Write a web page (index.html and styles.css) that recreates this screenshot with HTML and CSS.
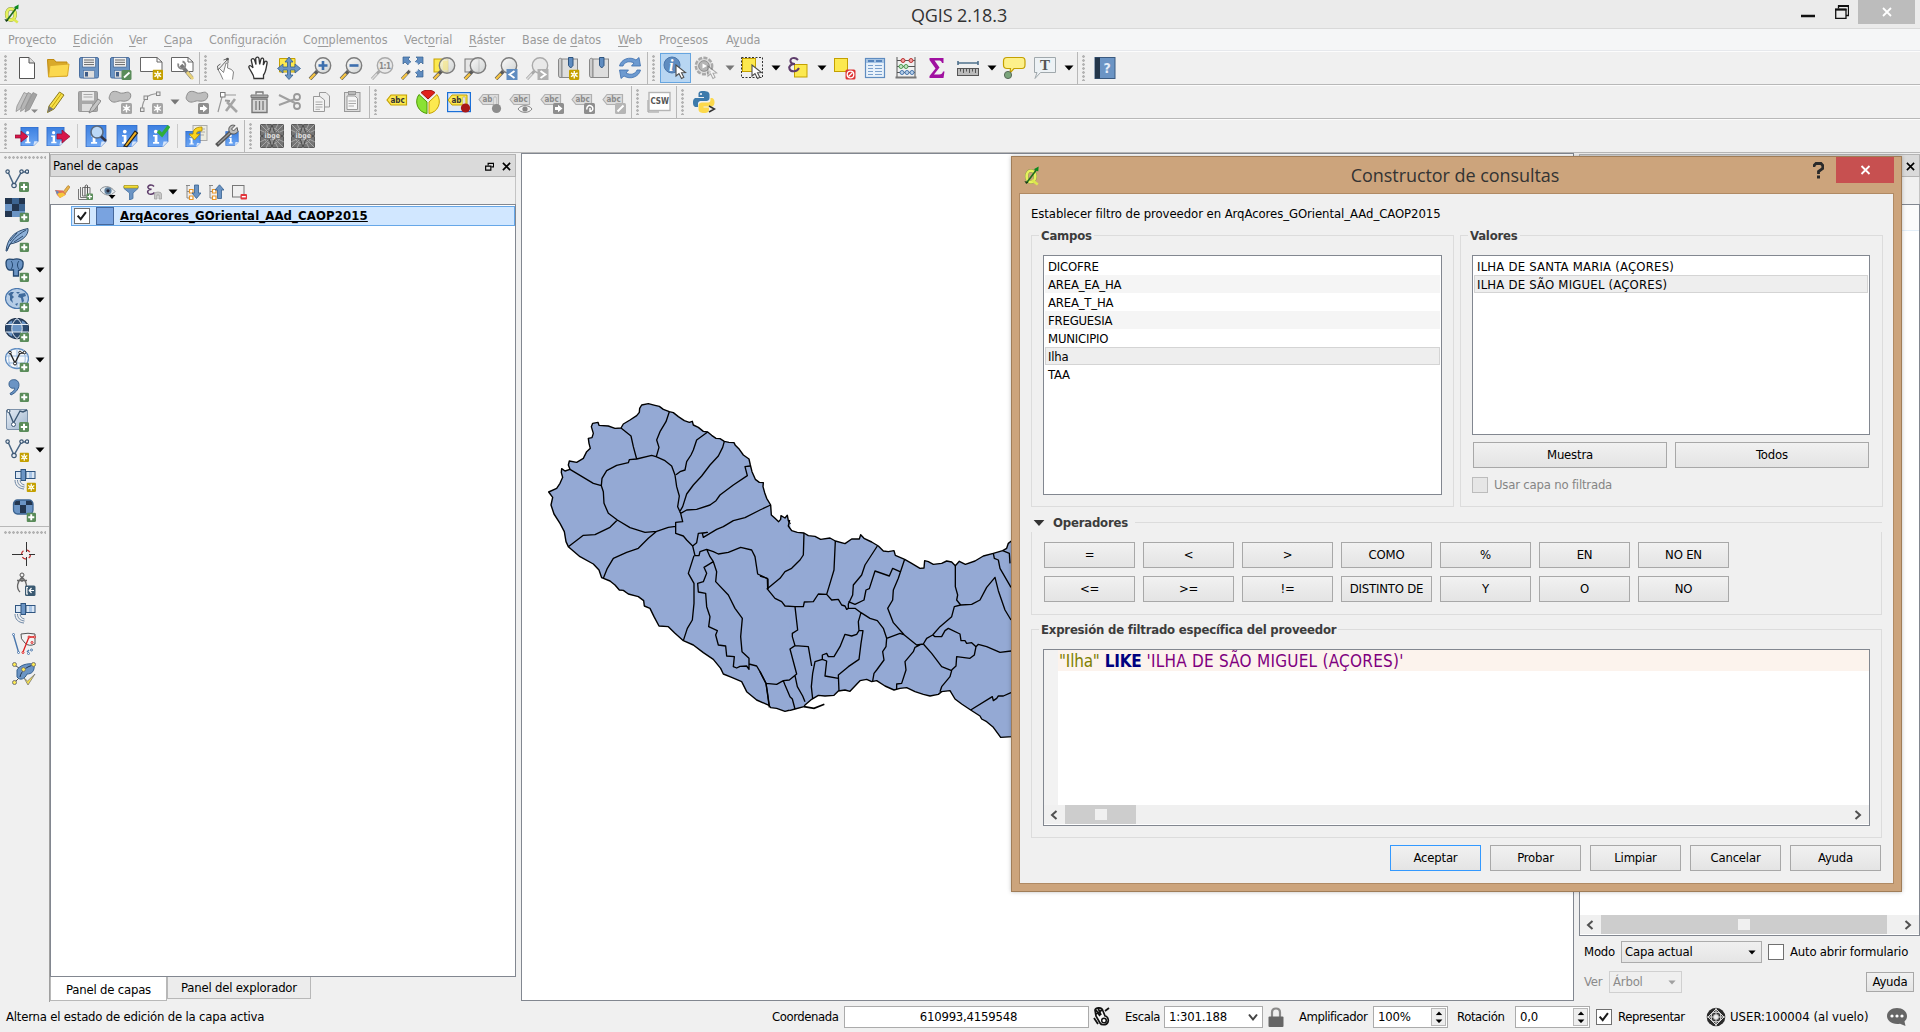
FILE: index.html
```html
<!DOCTYPE html>
<html lang="es">
<head>
<meta charset="utf-8">
<title>QGIS 2.18.3</title>
<link rel="stylesheet" href="styles.css">
</head>
<body>
<svg class="sprite" aria-hidden="true">
  <defs>
    <linearGradient id="g-blue" x1="0" y1="0" x2="0" y2="1"><stop offset="0" stop-color="#3b7fe0"/><stop offset="1" stop-color="#6fa8f5"/></linearGradient>
    <linearGradient id="g-glass" x1="0" y1="0" x2="1" y2="1"><stop offset="0" stop-color="#ffffff"/><stop offset="1" stop-color="#c4c8c8"/></linearGradient>
    <linearGradient id="g-box" x1="0" y1="0" x2="1" y2="1"><stop offset="0" stop-color="#e8eef5"/><stop offset="1" stop-color="#9db4ce"/></linearGradient>
  </defs>
  <!-- shared parts -->
  <symbol id="plus" viewBox="0 0 10 10"><rect width="10" height="10" rx="1.6" fill="#5a8c5a"/><path d="M5 1.8V8.2M1.8 5H8.2" stroke="#fff" stroke-width="2"/></symbol>
  <symbol id="star" viewBox="0 0 11 11"><rect width="11" height="11" rx="1.5" fill="#c4a000"/><path d="M5.5 1.5V9.5M2 3.5L9 7.5M9 3.5L2 7.5" stroke="#fff" stroke-width="1.4"/><circle cx="5.500" cy="5.500" r="1.900" fill="#fff"/><circle cx="5.500" cy="5.500" r="1" fill="#fce94f"/></symbol>
  <symbol id="star-g" viewBox="0 0 11 11"><rect width="11" height="11" rx="1.5" fill="#a5a5a5"/><path d="M5.500 1.500V9.500M2 3.500L9 7.500M9 3.500L2 7.500" stroke="#fff" stroke-width="1.400"/><circle cx="5.500" cy="5.500" r="1.900" fill="#fff"/></symbol>
  <symbol id="cursor" viewBox="0 0 12 16"><path d="M1 1L1 12L4 9.500L6.500 14.500L8.800 13.300L6.500 8.800L10.500 8.500Z" fill="#fff" stroke="#4d4d4d" stroke-width="1.100"/></symbol>
  <symbol id="lens" viewBox="0 0 24 24"><path d="M2 23L9.500 15" stroke="#5a5a5a" stroke-width="3.600"/><path d="M2 23L7 17.700" stroke="#f6c544" stroke-width="2.400"/><circle cx="15" cy="9.500" r="7.700" fill="url(#g-glass)" fill-opacity=".75" stroke="#7d7d7d" stroke-width="1.400"/></symbol>
  <symbol id="lens-g" viewBox="0 0 24 24"><path d="M2 23L9.500 15" stroke="#a8a8a8" stroke-width="3"/><path d="M2 23L7 17.700" stroke="#ddd" stroke-width="1.600"/><circle cx="15" cy="9.500" r="7.700" fill="#e9e9e9" stroke="#aaa" stroke-width="1.400"/></symbol>
  <symbol id="tag" viewBox="0 0 24 24"><path d="M2 10L6 5H21.500V15H6Z" fill="#fce94f" stroke="#c4a000" stroke-width="1.200"/></symbol>
  <symbol id="tag-g" viewBox="0 0 24 24"><path d="M1 9.500L5 4.500H20.500V14.500H5Z" fill="#dcdcdc" stroke="#b0b0b0" stroke-width="1.200"/></symbol>
  <symbol id="vee" viewBox="0 0 24 24"><path d="M3 4L9 17L16.500 4H22" fill="none" stroke="#4a6785" stroke-width="1.500"/><g fill="#e8eef5" stroke="#3b5672" stroke-width="1.200"><circle cx="2.600" cy="3.600" r="1.700"/><circle cx="16.500" cy="3.600" r="1.700"/><circle cx="22" cy="3.600" r="1.700"/><circle cx="9" cy="17.500" r="2.200"/></g></symbol>
  <symbol id="info" viewBox="0 0 20 20"><path d="M1 0H19V15L14 20H1Z" fill="url(#g-blue)" stroke="#2c66c4" stroke-width=".8"/><path d="M19 15L14 20L15 15Z" fill="#d8e6fa"/><circle cx="8" cy="6" r="1.700" fill="#fff"/><path d="M5.500 9H9.500V15.500H11V17H5.500V15.500H7V10.500H5.500Z" fill="#fff"/></symbol>
  <symbol id="floppy" viewBox="0 0 24 24"><rect x="2.500" y="1.500" width="19" height="20.500" rx="1.500" fill="#6b94c4" stroke="#4a6fa0"/><rect x="5.500" y="1.500" width="13" height="9.500" fill="#f2f2f2" stroke="#3d5c88" stroke-width=".6"/><path d="M7 4H17M7 6.300H17M7 8.600H17" stroke="#666"/><rect x="6.500" y="14.500" width="11" height="7.500" fill="#ddd" stroke="#4a6fa0" stroke-width=".6"/><rect x="8" y="16" width="3" height="4.500" fill="#3d5c88"/></symbol>
  <symbol id="sat" viewBox="0 0 24 24"><g stroke="#2f5580" stroke-width="1"><rect x="3.500" y="3.500" width="6" height="7" fill="#dbe7f4"/><rect x="14" y="3.500" width="9" height="7" fill="#dbe7f4"/><rect x="9" y="1.500" width="4.500" height="11" fill="#6b94c4"/></g><path d="M17 4H20V10H17Z" fill="#a9c5e6"/><path d="M3 12C3 17 6 20.500 12 21M5.500 12C5.500 16 8 18.500 12.500 19M8 12.500C8.500 15 10 16.500 12.500 17" fill="none" stroke="#6d87a5" stroke-width="1"/></symbol>
  <symbol id="down" viewBox="0 0 10 6"><path d="M.5.500H9.500L5 5.500Z"/></symbol>
  <symbol id="qlogo" viewBox="0 0 18 22"><ellipse cx="7.800" cy="11.500" rx="4.800" ry="6.400" fill="none" stroke="#8b9a4a" stroke-width="4"/><ellipse cx="7.800" cy="11.500" rx="4.800" ry="6.400" fill="none" stroke="#e6f25c" stroke-width="3"/><path d="M9 15.500L15.500 20.500" stroke="#dce84e" stroke-width="3"/><path d="M3 18.500L14 4" stroke="#1d6b1d" stroke-width="1.800"/><path d="M16.500 .3L16 6L11 3.500Z" fill="#0b8a1e"/><path d="M.5 16.500L5 18L2.500 20Z" fill="#143f14"/></symbol>

  <!-- file -->
  <symbol id="i-new" viewBox="0 0 24 24"><path d="M4.500 1.500H14L19.500 7V22.500H4.500Z" fill="#fff" stroke="#555"/><path d="M14 1.500V7H19.500" fill="#ddd" stroke="#555"/></symbol>
  <symbol id="i-open" viewBox="0 0 24 24"><path d="M1.500 3.500H8L10 6H21V20H2.500Z" fill="#d9a92a" stroke="#c08a10"/><path d="M4 9.500L23 8L21.500 20L2.500 21Z" fill="#fbd84f" stroke="#d9a92a"/></symbol>
  <symbol id="i-saveas" viewBox="0 0 24 24"><use href="#floppy"/><rect x="13.500" y="14" width="10" height="10" rx="1.500" fill="#5a8c5a"/><path d="M16 21.500L21.500 16.500" stroke="#fff" stroke-width="1.800"/></symbol>
  <symbol id="i-layout" viewBox="0 0 24 24"><path d="M1.500 1.500H18L23 6V15.500H1.500Z" fill="#fff" stroke="#666"/><path d="M18 1.500V6H23" fill="none" stroke="#666"/><use href="#star" x="13.500" y="13.500" width="10.500" height="10.500"/></symbol>
  <symbol id="i-layouts" viewBox="0 0 24 24"><path d="M1.500 1.500H18L23 6V15.500H1.500Z" fill="#fff" stroke="#666"/><path d="M18 1.500V6H23" fill="none" stroke="#666"/><path d="M11 9L22 22" stroke="#777" stroke-width="3.600"/><path d="M17 16L23 23" stroke="#e8d27a" stroke-width="2.800"/><path d="M8.500 7.500a3.600 3.600 0 1 0 4-2" fill="none" stroke="#888" stroke-width="1.800"/></symbol>
  <!-- navigation -->
  <symbol id="i-touch" viewBox="0 0 24 24"><path d="M8 23.500L5.500 18L3 13.500L4.500 12.500L8.500 16.500L11 7L12.800 7.500L12.500 12L16.500 13.500L18.500 16L17.500 23.500" fill="#fff" stroke="#777" stroke-width=".9"/><path d="M3 14L12 4M8.500 4L13 2.500L13 7M5.500 8L2.500 10L3 14" fill="none" stroke="#666" stroke-width="1"/><circle cx="12.500" cy="3" r="1.300" fill="#555"/></symbol>
  <symbol id="i-hand" viewBox="0 0 24 24"><path d="M8 22.500C8 18 4 15 2.800 11C3.300 8.500 5.500 9.800 7 12L5.200 4C6 1.800 8 2.300 8.600 4L10 8.500L9.700 2.500C10.500.5 12.600 1 13 2.700L13.700 8.300L15 3C16 1.300 17.700 2.200 17.700 4L17.300 9L19 5.500C20.300 4.500 21.500 5.800 21 7.500C20 12 20 16 17.500 19V22.500Z" fill="#fff" stroke="#333" stroke-width="1.300"/></symbol>
  <symbol id="i-pansel" viewBox="0 0 24 24"><path d="M2.500 2.500H18V16H2.500Z" fill="#fce94f" stroke="#c4a000"/><path d="M12 1L16 6H13.500V11H18V8L23.500 12.500L18 17V14H13.500V19H16L12 23.500L8 19H10.500V14H6V17L.5 12.500L6 8V11H10.500V6H8Z" fill="#6b94c4" stroke="#35608f" stroke-width=".8"/></symbol>
  <symbol id="i-zin" viewBox="0 0 24 24"><use href="#lens"/><path d="M15 5V14M10.500 9.500H19.500" stroke="#3c6fae" stroke-width="2.600"/></symbol>
  <symbol id="i-zout" viewBox="0 0 24 24"><use href="#lens"/><path d="M10.500 9.500H19.500" stroke="#3c6fae" stroke-width="2.600"/></symbol>
  <symbol id="i-zfull" viewBox="0 0 24 24"><g fill="#5f8cc0" stroke="#35608f" stroke-width=".7"><path d="M2 1H9L7 3L10 6L7 9L4 6L2 8Z"/><path d="M22 1H15L17 3L14 6L17 9L20 6L22 8Z"/><path d="M22 21H15L17 19L14 16L17 13L20 16L22 14Z"/></g><path d="M1 23L9.500 14" stroke="#5a5a5a" stroke-width="3"/><path d="M1 23L6 17.700" stroke="#f6c544" stroke-width="2.200"/><circle cx="12.500" cy="11" r="5.500" fill="#f5f5f5" fill-opacity=".9"/></symbol>
  <symbol id="i-zsel" viewBox="0 0 24 24"><rect x="2" y="3" width="14" height="13" fill="#fce94f" stroke="#c4a000"/><use href="#lens"/><path d="M11 5H16V14H11Z" fill="#f5e68a" opacity=".6"/></symbol>
  <symbol id="i-zlay" viewBox="0 0 24 24"><rect x="2" y="3" width="14" height="13" fill="#e6e6e6" stroke="#777"/><use href="#lens"/></symbol>
  <symbol id="i-zlast" viewBox="0 0 24 24"><use href="#lens"/><rect x="12.500" y="13" width="11" height="11" fill="#5f8cc0"/><path d="M20.500 15L15.500 18.500L20.500 22" fill="none" stroke="#fff" stroke-width="1.900"/></symbol>
  <symbol id="i-znext" viewBox="0 0 24 24"><use href="#lens-g"/><rect x="12.500" y="13" width="11" height="11" fill="#b0b0b0"/><path d="M15.500 15L20.500 18.500L15.500 22" fill="none" stroke="#fff" stroke-width="1.900"/></symbol>
  <symbol id="i-bm" viewBox="0 0 24 24"><path d="M2.500 4C2.500 2 6 1.500 6 4V21.500H4Q2.500 21.500 2.500 19Z" fill="#ccc" stroke="#888"/><rect x="6" y="3" width="15.500" height="18.500" fill="#dedede" stroke="#888"/><path d="M12.500 1.500H17V9.500L14.700 12L12.500 9.500Z" fill="#5f8cc0" stroke="#2f5580"/></symbol>
  <symbol id="i-bmnew" viewBox="0 0 24 24"><use href="#i-bm"/><use href="#star" x="13" y="13.500" width="10.500" height="10.500"/></symbol>
  <symbol id="i-refresh" viewBox="0 0 24 24"><path d="M1.500 10C3 3 12 0 18 4L21 1.500L22.500 10H13.500L16 7C11 4.500 6.500 6 5 10Z" fill="#6d9ad0" stroke="#3c6fae" stroke-width=".8"/><path d="M22.500 14C21 21 12 24 6 20L3 22.500L1.500 14H10.500L8 17C13 19.500 17.500 18 19 14Z" fill="#6d9ad0" stroke="#3c6fae" stroke-width=".8"/></symbol>
  <!-- attributes -->
  <symbol id="i-ball" viewBox="0 0 24 24"><circle cx="9" cy="9" r="8" fill="#5f8cc0" stroke="#4a77ad"/></symbol>
  <symbol id="i-gear" viewBox="0 0 24 24"><circle cx="10" cy="10" r="8.200" fill="#ddd" stroke="#a8a8a8" stroke-width="2.400" stroke-dasharray="4 1.400"/><circle cx="10" cy="10" r="5.300" fill="#b5b5b5" stroke="#8e8e8e"/><path d="M8.500 7.500L13 10L8.500 12.500Z" fill="#fff"/><g opacity=".45"><use href="#cursor" x="13" y="9" width="11" height="15"/></g></symbol>
  <symbol id="i-select" viewBox="0 0 24 24"><rect x="1.500" y="1.500" width="21" height="20" fill="none" stroke="#333" stroke-dasharray="2 1.500"/><rect x="2.500" y="2.500" width="13" height="13" fill="#fce94f" stroke="#c4a000"/><use href="#cursor" x="11" y="8" width="12" height="16"/></symbol>
  <symbol id="i-exprsel" viewBox="0 0 24 24"><rect x="8.500" y="8.500" width="12.500" height="12.500" fill="#fce94f" stroke="#c4a000"/><path d="M12 4C9 .5 3.500 2 4.500 5.500C5 8 8 8 9 8C5 8 2.500 10 3.500 13C5 16.500 11 16 13 12" fill="none" stroke="#5e3d6b" stroke-width="2"/></symbol>
  <symbol id="i-desel" viewBox="0 0 24 24"><rect x="2.500" y="2.500" width="13" height="13" fill="#fce94f" stroke="#c4a000"/><rect x="13.500" y="13.500" width="10" height="10" rx="1.500" fill="#d33" /><circle cx="18.500" cy="18.500" r="3.300" fill="none" stroke="#fff" stroke-width="1.300"/><path d="M16.500 20.500L20.500 16.500" stroke="#fff" stroke-width="1.200"/></symbol>
  <symbol id="i-table" viewBox="0 0 24 24"><rect x="2.500" y="2.500" width="19" height="19" fill="#e8f1fa" stroke="#5f8cc0" stroke-width="1.200"/><rect x="3" y="3" width="18" height="4" fill="#a6c4e4"/><path d="M5 5H11M13 5H19" stroke="#3c6fae" stroke-width="1.500"/><path d="M5 9.500H10M12 9.500H19M5 12.500H10M12 12.500H19M5 15.500H10M12 15.500H19M5 18.500H10M12 18.500H19" stroke="#7aa0cc" stroke-width="1.200"/></symbol>
  <symbol id="i-abacus" viewBox="0 0 24 24"><path d="M3 1V22M21 1V22M3 4.500H21M3 10.500H21M3 16.500H21" stroke="#555" fill="none"/><path d="M1.500 21.500H22.500" stroke="#777" stroke-width="2"/><g stroke="#b33" fill="#f3a0a0"><circle cx="9" cy="4.500" r="2"/><circle cx="17" cy="4.500" r="2"/></g><g stroke="#4e9a4e" fill="#c4e4c4"><circle cx="7" cy="10.500" r="2"/><circle cx="12" cy="10.500" r="2"/></g><g stroke="#4a77ad" fill="#b5cfea"><circle cx="8" cy="16.500" r="2"/><circle cx="13" cy="16.500" r="2"/><circle cx="18" cy="16.500" r="2"/></g></symbol>
  <symbol id="i-sum" viewBox="0 0 24 24"><path d="M4.500 2H18.500V7H17C16.500 5 15.500 4.500 13 4.500H9.500L14.500 11.500L9 18.500H14C16.500 18.500 17.500 17.500 18 15.500H19.500L18.500 22H4.500V20L10.500 12.500L4.500 4Z" fill="#a010a0"/></symbol>
  <symbol id="i-measure" viewBox="0 0 24 24"><path d="M2 7H22M2 5V9M22 5V9" stroke="#4f718c" stroke-width="1.600"/><rect x="1.500" y="12.500" width="21" height="7" fill="#bbb" stroke="#555"/><path d="M4.500 12.500V15.500M7.500 12.500V17M10.500 12.500V15.500M13.500 12.500V17M16.500 12.500V15.500M19.500 12.500V17" stroke="#555"/></symbol>
  <symbol id="i-tip" viewBox="0 0 24 24"><path d="M5 1.500H20Q23 1.500 23 5V9Q23 12.500 20 12.500H12L8 17L8.500 12.500H5Q1.500 12.500 1.500 9V5Q1.500 1.500 5 1.500Z" fill="#fdf08a" stroke="#c4a000" stroke-width="1.200"/><circle cx="6" cy="19" r="3.600" fill="#7ba57b" stroke="#5a6b5a"/></symbol>
  <symbol id="i-text" viewBox="0 0 24 24"><path d="M1.500 1.500H22.500V16.500H7.500L2 22.500L4 16.500H1.500Z" fill="#edf2f5" stroke="#a0a8ac"/></symbol>
  <symbol id="i-book" viewBox="0 0 24 24"><rect x="2" y="1.500" width="20" height="21" fill="#6b94c4" stroke="#3a5a80"/><rect x="2" y="1.500" width="5" height="21" fill="#23364a"/></symbol>
  <!-- digitizing -->
  <symbol id="i-edits" viewBox="0 0 24 24"><g stroke="#8a8a8a" stroke-width=".7"><path d="M1 21.500L2 16L9 2.500L12.500 4L5 19Z" fill="#c4c4c4"/><path d="M5.500 21.500L6.500 16L13 2.500L16.500 4L9.500 19Z" fill="#b5b5b5"/><path d="M10 22L11 16.500L18 2.500L22 4.500L14.500 19.500Z" fill="#a3a3a3"/></g><path d="M16 19.500H23L19.500 23Z" fill="#888"/></symbol>
  <symbol id="i-pencil" viewBox="0 0 24 24"><path d="M1.500 22.500L3 16L13.500 2L18 5L8 19Z" fill="#f7e04b" stroke="#8a7a1e"/><path d="M1.500 22.500L3 16L7.500 19Z" fill="#777"/><path d="M5.500 17.500L15.500 3.500" stroke="#c9a800"/></symbol>
  <symbol id="i-savee" viewBox="0 0 24 24"><rect x="1.500" y="1.500" width="19" height="20" rx="1" fill="#a8a8a8" stroke="#999"/><rect x="5" y="2" width="12" height="8.500" fill="#ececec"/><path d="M6.500 4.500H15.500M6.500 7H15.500" stroke="#aaa"/><rect x="5" y="14" width="10" height="7" fill="#ddd"/><path d="M12 23L14 18L21 9L24 11L17 20.500Z" fill="#c4c4c4" stroke="#888"/></symbol>
  <symbol id="i-poly" viewBox="0 0 24 24"><path d="M2 5C3 0 9 1 12 3C17 4 20 0 22.500 4C24 9 19 12 14 11C10 10 7 14 3 11C.5 9 1 7 2 5Z" fill="#bdbdbd" stroke="#8c8c8c"/><use href="#star-g" x="13" y="13" width="11" height="11"/></symbol>
  <symbol id="i-curve" viewBox="0 0 24 24"><path d="M3 19C4 9 8 4 19 3.500" fill="none" stroke="#999" stroke-width="1.200"/><g fill="#e8e8e8" stroke="#888"><rect x="1.500" y="18" width="3.500" height="3.500"/><rect x="5" y="6" width="3.500" height="3.500"/><rect x="17.500" y="2" width="3.500" height="3.500"/></g><use href="#star-g" x="13" y="13" width="11" height="11"/></symbol>
  <symbol id="i-move" viewBox="0 0 24 24"><path d="M2 5C3 0 9 1 12 3C17 4 20 0 22.500 4C24 9 19 12 14 11C10 10 7 14 3 11C.5 9 1 7 2 5Z" fill="#bdbdbd" stroke="#8c8c8c"/><rect x="13" y="13" width="11" height="11" rx="1.500" fill="#8e8e8e"/><path d="M15 17H18V14.800L22.500 18.500L18 22.200V20H15Z" fill="#fff"/></symbol>
  <symbol id="i-node" viewBox="0 0 24 24"><path d="M2 22L6.500 5H20" fill="none" stroke="#999" stroke-width="1.200"/><rect x="4.500" y="2.500" width="4.500" height="4.500" fill="#fff" stroke="#777"/><path d="M10 21L19 9M11 12L21 22" stroke="#a5a5a5" stroke-width="2.600"/><path d="M9 10.500L14 11" stroke="#999" stroke-width="2"/></symbol>
  <symbol id="i-trash" viewBox="0 0 24 24"><path d="M5 9H20V22.500H5Z" fill="#d5d5d5" stroke="#777" stroke-width="1.400"/><path d="M4 5H21V7.500H4Z" fill="#aaa" stroke="#777"/><path d="M9 4.500V2H16V4.500M9 11V20M12.500 11V20M16 11V20" fill="none" stroke="#777" stroke-width="1.300"/></symbol>
  <symbol id="i-cut" viewBox="0 0 24 24"><path d="M1 5L17 13M1 15L17 9" stroke="#a0a0a0" stroke-width="2"/><circle cx="19" cy="7" r="3" fill="none" stroke="#999" stroke-width="1.800"/><circle cx="19" cy="16" r="3" fill="none" stroke="#999" stroke-width="1.800"/></symbol>
  <symbol id="i-copy" viewBox="0 0 24 24"><path d="M10.500 2.500H17L20.500 6V17H10.500Z" fill="#eee" stroke="#999"/><path d="M4.500 6.500H11L15.500 10V21.500H4.500Z" fill="#f3f3f3" stroke="#999"/><path d="M6.500 12H13.500M6.500 14.500H13.500M6.500 17H13.500M6.500 19.300H11" stroke="#aaa"/></symbol>
  <symbol id="i-paste" viewBox="0 0 24 24"><rect x="4.500" y="2.500" width="15.500" height="19" fill="#ddd" stroke="#999"/><path d="M7 6H15L17.500 8.500V19.500H7Z" fill="#f6f6f6" stroke="#999"/><path d="M8.500 11H16M8.500 13.500H16M8.500 16H14" stroke="#aaa"/><rect x="8.500" y="1.500" width="7" height="3" fill="#bbb" stroke="#999"/></symbol>
  <!-- labels -->
  <symbol id="i-pie" viewBox="0 0 24 24"><path d="M12 9L5 2.500A11 11 0 0 1 19 2.500Z" fill="#e0201c" stroke="#a01010"/><path d="M11 12V23.500A12 12 0 0 1 3 4.500Z" fill="#8ae234" stroke="#4e9a06"/><path d="M13 12V23.500A12 12 0 0 0 21 4.500Z" fill="#fce94f" stroke="#c4a000"/></symbol>
  <symbol id="i-pinbg" viewBox="0 0 24 24"><rect x=".6" y="2.600" width="22.800" height="19" fill="#dfe9f5" stroke="#1a6fd8" stroke-width="1.200"/><path d="M1 10L5 5H20V15H5Z" fill="#fce94f" stroke="#c4a000"/></symbol>
  <symbol id="i-pin" viewBox="0 0 24 24"><path d="M16 7H18V15H16Z" fill="#fff" stroke="#999" stroke-width=".6"/><circle cx="18.500" cy="18" r="4.600" fill="#a81818"/></symbol>
  <symbol id="i-ping" viewBox="0 0 24 24"><path d="M16 7H18V15H16Z" fill="#fff" stroke="#999" stroke-width=".6"/><circle cx="18.500" cy="18.500" r="4.600" fill="#8c8c8c"/></symbol>
  <symbol id="i-lshow" viewBox="0 0 24 24"><path d="M9 19C12 14.500 20 14.500 23 19C20 23.500 12 23.500 9 19Z" fill="#f3f3f3" stroke="#888"/><circle cx="16" cy="19" r="2.600" fill="#888"/></symbol>
  <symbol id="i-lmove" viewBox="0 0 24 24"><rect x="13" y="13" width="11" height="11" rx="1.500" fill="#8e8e8e"/><path d="M15 17H18V14.800L22.500 18.500L18 22.200V20H15Z" fill="#fff"/></symbol>
  <symbol id="i-lrot" viewBox="0 0 24 24"><rect x="13" y="13" width="11" height="11" rx="1.500" fill="#8e8e8e"/><path d="M16 19.500A3 3 0 1 1 19 21.500M19 18V22" fill="none" stroke="#fff" stroke-width="1.500"/></symbol>
  <symbol id="i-ledit" viewBox="0 0 24 24"><rect x="13" y="13" width="11" height="11" rx="1.500" fill="#b5b5b5"/><path d="M15.500 21.500L21.500 15.500" stroke="#fff" stroke-width="1.900"/></symbol>
  <symbol id="i-csw" viewBox="0 0 24 24"><path d="M1 10V22H12" fill="none" stroke="#999"/><rect x="2" y="2.500" width="21" height="18" fill="#fff" stroke="#b5b5b5" stroke-width="1.400"/></symbol>
  <symbol id="i-py" viewBox="0 0 24 24"><path d="M11 1C7 1 6.500 2.500 6.500 4.500V7H12V8H4C1.500 8 1 10.500 1 12.500S1.500 17 4 17H6V13.500C6 11.500 8 11 9.500 11H14.500C16 11 17.500 10 17.500 8V4.500C17.500 2 15 1 11 1Z" fill="#3d7aab"/><path d="M12 23C16 23 17 21.500 17 19.500V17.500H11.500V16.500H19.500C22 16.500 22.500 14 22.500 12S21.500 8 19.500 8H18.500V10C18.500 12 17 12.500 15 12.500H10C8 12.500 6.500 13.500 6.500 15.500V19.500C6.500 22 9 23 12 23Z" fill="#fcd94c"/><circle cx="9" cy="4" r="1" fill="#fff"/><path d="M17 16L22.500 19L17 22" fill="none" stroke="#333" stroke-width="1.500"/></symbol>
  <!-- info plugin -->
  <symbol id="i-in" viewBox="0 0 24 24"><use href="#info" x="5" y="3" width="19" height="19"/><path d="M0 11H6V7L13 12.500L6 18V14H0Z" fill="#d8174a" stroke="#8c1030" stroke-width=".7"/></symbol>
  <symbol id="i-out" viewBox="0 0 24 24"><use href="#info" x="0" y="3" width="19" height="19"/><path d="M11 10H16V6L24 12.500L16 19V15H11Z" fill="#d8174a" stroke="#8c1030" stroke-width=".7"/></symbol>
  <symbol id="i-isearch" viewBox="0 0 24 24"><use href="#info" x="1" y="1" width="22" height="22"/><circle cx="13" cy="8" r="6" fill="#bcd8f6" stroke="#5b6b80" stroke-width="1.600"/><path d="M17 12.500L22 17" stroke="#334" stroke-width="2.600"/></symbol>
  <symbol id="i-iedit" viewBox="0 0 24 24"><use href="#info" x="1" y="1" width="22" height="22"/><path d="M9 22L20 7L22.500 9L12 22.500Z" fill="#f2b01e" stroke="#222" stroke-width="1.200"/></symbol>
  <symbol id="i-icheck" viewBox="0 0 24 24"><use href="#info" x="1" y="1" width="22" height="22"/><path d="M12 7L16 11L23 2" fill="none" stroke="#2fae3a" stroke-width="3.400"/></symbol>
  <symbol id="i-iimp" viewBox="0 0 24 24"><rect x="9" y="1.500" width="14" height="15" fill="#ececdf" stroke="#aaa"/><path d="M11 5H21M11 8H21M11 11H20" stroke="#aaa"/><use href="#info" x="1" y="7" width="16" height="16"/><path d="M18 3C11 3 9 6 9 10H5L10.500 16L16 10H12.500C12.500 8 14 7 18 7Z" fill="#fbd41c" stroke="#a88600" stroke-width=".8"/></symbol>
  <symbol id="i-iconf" viewBox="0 0 24 24"><use href="#info" x="10" y="6" width="14" height="17"/><path d="M1.500 21.500L16 8" stroke="#555" stroke-width="4"/><path d="M3 20L15 9" stroke="#999" stroke-width="1.300"/><path d="M22 3.500L18.500 7L16.500 5L20 1.500C16 0 13 3 14 7C15 11 21 11 23 7.500Z" fill="#bbb" stroke="#555"/></symbol>
  <symbol id="i-ibge" viewBox="0 0 24 24"><rect x=".5" y=".5" width="23" height="23" fill="#757575" stroke="#5a5a5a"/><path d="M0 0L24 24M24 0L0 24M12 0V24M0 12H24M6 0L18 24M18 0L6 24M0 6L24 18M0 18L24 6" stroke="#bdbdbd" stroke-width=".7"/><circle cx="12" cy="12" r="8" fill="none" stroke="#a8a8a8" stroke-width=".8"/><path d="M12 1L15 9L23 12L15 15L12 23L9 15L1 12L9 9Z" fill="none" stroke="#3a3a3a" stroke-width=".8"/><rect x="4" y="8.500" width="16" height="6.500" fill="#6e6e6e"/></symbol>
  <!-- data sources -->
  <symbol id="l-vec" viewBox="0 0 24 24"><use href="#vee"/><use href="#plus" x="14" y="14" width="10" height="10"/></symbol>
  <symbol id="l-ras" viewBox="0 0 24 24"><rect y="0" width="20" height="19" fill="#6b94c4"/><path d="M0 0H7V6H0ZM14 0H20V6H14ZM7 6H14V13H7ZM0 13H7V19H0Z" fill="#23364f"/><path d="M7 0H14V6H7ZM14 6H20V13H14Z" fill="#3c6491"/><use href="#plus" x="14.500" y="14.500" width="9.500" height="9.500"/></symbol>
  <symbol id="l-feather" viewBox="0 0 24 24"><path d="M1 23C2 12 8 3 23 .5C24 7 17 14 5 16L2 23Z" fill="#8db0d8" stroke="#2f4d70"/><path d="M2 22C6 13 12 7 21 2M5 13L12 5M9 14L18 8" fill="none" stroke="#2f4d70" stroke-width="1"/><use href="#plus" x="14.500" y="14.500" width="9.500" height="9.500"/></symbol>
  <symbol id="l-pg" viewBox="0 0 24 24"><path d="M1 5C1 0 5 1 8 1.500C11 .5 17 .5 18 4C18.500 9 17 12 13.500 12.500V18H8.500V12H6C2 13 1 8 1 5Z" fill="#6b94c4" stroke="#23466e" stroke-width="1.300"/><path d="M6 3C8 5 8 9 6 11M14 3C12 5 12 9 14 11" fill="none" stroke="#23466e"/><use href="#plus" x="14.500" y="14.500" width="9.500" height="9.500"/></symbol>
  <symbol id="l-wms" viewBox="0 0 24 24"><ellipse cx="12" cy="10.500" rx="11.500" ry="10" fill="#b5cce6" stroke="#4a77ad" stroke-width="1.200"/><path d="M3 6L6 4L9 4L7 7L9 9L7 11L8 15L5 12L5 8ZM11 4L15 4L13 6ZM14 6L20 5L21 8L18 9L19 13L17 15L16 10L13 9ZM10 16L13 15L12 18Z" fill="#3f6a9c"/><use href="#plus" x="14.500" y="14.500" width="9.500" height="9.500"/></symbol>
  <symbol id="l-wcs" viewBox="0 0 24 24"><ellipse cx="12" cy="10.500" rx="11.500" ry="10" fill="#6b94c4" stroke="#23364f" stroke-width="1.400"/><path d="M7 2H17V6H7ZM1 6.500H7V14H1ZM17 6.500H23V14H17ZM7 14H17V20H7Z" fill="#2c4a70"/><path d="M1 6.500H23M1 14H23M12 .5C5 5 5 16 12 20.500C19 16 19 5 12 .5Z" fill="none" stroke="#e8eef5"/><use href="#plus" x="14.500" y="14.500" width="9.500" height="9.500"/></symbol>
  <symbol id="l-wfs" viewBox="0 0 24 24"><ellipse cx="12" cy="10.500" rx="11.500" ry="10" fill="#f4f8fc" stroke="#5f8cc0" stroke-width="1.300"/><path d="M1 8H23M3 15H20M12 .5V20M6 2C3 7 3 14 6 19M18 2C21 7 21 14 18 19" fill="none" stroke="#9bbbe0"/><path d="M5 4.500L10 15L15 5H20" fill="none" stroke="#222" stroke-width="1.400"/><g fill="#fff" stroke="#222"><circle cx="5" cy="4.500" r="1.300"/><circle cx="15" cy="4.500" r="1.300"/><circle cx="19.500" cy="4.500" r="1.300"/><circle cx="10" cy="15.500" r="1.500"/></g><use href="#plus" x="14.500" y="14.500" width="9.500" height="9.500"/></symbol>
  <symbol id="l-csv" viewBox="0 0 24 24"><path d="M4 6C4 2 8 1 11 2C16 4 15 13 6 17L5 15.500C8 13.500 10 12 9.500 10C6 11 4 9 4 6Z" fill="#6b94c4" stroke="#3a628f"/><use href="#plus" x="14.500" y="14.500" width="9.500" height="9.500"/></symbol>
  <symbol id="l-virt" viewBox="0 0 24 24"><rect x="1.500" y="1.500" width="21" height="20" rx="1.500" fill="url(#g-box)" stroke="#7d92aa"/><path d="M3.500 3L8.500 15L15 3L18 4L22 2" fill="none" stroke="#3b5672" stroke-width="1.400"/><circle cx="3.500" cy="3" r="1.500" fill="#fff" stroke="#3b5672"/><circle cx="8.500" cy="16.500" r="2" fill="#fff" stroke="#3b5672"/><use href="#plus" x="14" y="14" width="10" height="10"/></symbol>
  <symbol id="l-vnew" viewBox="0 0 24 24"><use href="#vee"/><use href="#star" x="14.500" y="14.500" width="9.500" height="9.500"/></symbol>
  <symbol id="l-satnew" viewBox="0 0 24 24"><use href="#sat"/><use href="#star" x="14.500" y="14.500" width="9.500" height="9.500"/></symbol>
  <symbol id="l-rnew" viewBox="0 0 24 24"><rect x="1.500" y="2" width="19.500" height="14" rx="4" fill="#6b94c4" stroke="#3c6491" stroke-width="1.300"/><path d="M2.500 4Q3.500 2.500 8 2.700V7H2.500ZM14 2.700H19Q20.500 4 20.500 7H14ZM8 7H14V15H8Z" fill="#23364f"/><use href="#plus" x="14.500" y="14.500" width="9.500" height="9.500"/></symbol>
  <symbol id="l-cross" viewBox="0 0 24 24"><circle cx="14" cy="12.500" r="4.500" fill="none" stroke="#c03030" stroke-width="1.300" stroke-dasharray="4 3"/><path d="M14.500 0V10M14.500 15V24M0 12.500H11M17 12.500H23" stroke="#333" stroke-width="1"/></symbol>
  <symbol id="l-comp" viewBox="0 0 24 24"><circle cx="10" cy="3" r="2" fill="none" stroke="#555"/><path d="M10 5C5 10 4 16 8 20M10 5C14 9 15 12 14 15M5 8.500H15M10 5V10" fill="none" stroke="#666" stroke-width="1.300"/><rect x="13" y="13.500" width="10.500" height="10.500" rx="1.500" fill="#3b5a72"/><path d="M16 15.500H14.800V22H16M22 18.500H17.500M19.500 16L17.300 18.500L19.500 21" fill="none" stroke="#fff" stroke-width="1.200"/></symbol>
  <symbol id="l-topo" viewBox="0 0 24 24"><path d="M1.500 3L6.500 20M15 20L17 18" stroke="#4a77ad" stroke-width="1.400"/><path d="M9 2Q16 .5 23 2V12Q17 15 13 11Q8 7 9 2Z" fill="#f3f3f3" stroke="#555"/><path d="M11 20L17 5H22" fill="none" stroke="#d22" stroke-width="1.300"/><g fill="#fff" stroke="#d22"><circle cx="17" cy="5" r="1"/><circle cx="22.500" cy="5" r="1"/><circle cx="20" cy="10.500" r="1"/><circle cx="11" cy="20.500" r="1"/></g><g fill="#fff" stroke="#4a77ad"><circle cx="1.500" cy="2.500" r="1"/><circle cx="6.500" cy="20.500" r="1"/><circle cx="19.500" cy="18" r="1"/><circle cx="16.500" cy="21.500" r="1"/></g></symbol>
  <symbol id="l-check" viewBox="0 0 24 24"><path d="M2.500 3L7 6M2.500 20.500L7 16" stroke="#555"/><path d="M5 8C8 3 15 1 22 2C23 9 20 12 15 12C13 17 8 19 5 15Z" fill="#6b94c4" stroke="#35608f"/><path d="M8 15C9 9 15 4 22 3" fill="none" stroke="#23364f"/><g fill="#fce94f" stroke="#777"><circle cx="2.500" cy="2.500" r="2"/><circle cx="21.500" cy="2.500" r="2"/><circle cx="11.500" cy="7.500" r="2"/><circle cx="2.500" cy="20.500" r="2"/></g><path d="M12 16L15.500 19L23 12L16 23Z" fill="#f7e04b" stroke="#777" stroke-width=".8"/></symbol>
  <!-- layer panel -->
  <symbol id="p-style" viewBox="0 0 16 16"><path d="M9 8L14 1.500L16 3L11 10Z" fill="#e8b24a" stroke="#b0802a" stroke-width=".7"/><path d="M1 6L9 6.500L12 10.500L6 14L3 11Z" fill="#e0705a"/><path d="M3 9.500L9 8.500L11.500 11L6 14Z" fill="#f5c83c"/><path d="M1.500 6L3 10.500L5 8Z" fill="#5f8cc0"/></symbol>
  <symbol id="p-group" viewBox="0 0 16 16"><path d="M1.500 5V15.500H10M3.500 3V13.500H12M5.500 3.500H13V12H5.500Z" fill="none" stroke="#777"/><path d="M8 12V3Q8 1 9.500 1T10.500 3V10" fill="none" stroke="#555"/><rect x="9.500" y="9.500" width="6.500" height="6.500" rx="1" fill="#5a8c5a"/><path d="M12.700 10.500V15M10.500 12.700H15" stroke="#fff" stroke-width="1.300"/></symbol>
  <symbol id="p-eye" viewBox="0 0 16 16"><path d="M0 6C3 1.500 10 1 15 7.500C11 13 4 12 0 6Z" fill="#e8eef2" stroke="#8a8f94"/><circle cx="8" cy="6.800" r="3.600" fill="#5f7f9c"/><circle cx="8" cy="6.800" r="1.600" fill="#223"/><path d="M8.500 11H15.500L12 15Z" fill="#000"/></symbol>
  <symbol id="p-filter" viewBox="0 0 16 16"><path d="M1 2H15V4.500L10 9V14.500L6.500 16V9L1 4.500Z" fill="#6b94c4" stroke="#44709f" stroke-width=".8"/><path d="M1 1.500H15V4H1Z" fill="#f2dd3a" stroke="#a89000" stroke-width=".6"/></symbol>
  <symbol id="p-expr" viewBox="0 0 16 16"><path d="M8 2.500C6 0 1.500 1 2 3.500C2.500 5.200 4 5.500 5.500 5.300C2.500 5.400 1 7 2 9C3 11 7 10.500 8.500 8.500" fill="none" stroke="#5e3d6b" stroke-width="1.600"/><path d="M8.500 15V10Q8.500 8 12 8T15.500 10V15H13V11H11V15Z" fill="#c9c9c9" stroke="#999" stroke-width=".7"/></symbol>
  <symbol id="p-exp" viewBox="0 0 16 16"><path d="M1 1.500H5M2 1.500V14H6M2 7.500H6" fill="none" stroke="#888"/><path d="M4.500 5.500H8V9H4.500ZM4.500 12H8V15.500H4.500Z" fill="#fff" stroke="#e8962a" stroke-width="1.200"/><path d="M9.500 1H13.500V9H16L11.500 14.500L7 9H9.500Z" fill="#6b94c4" stroke="#35608f" stroke-width=".8"/></symbol>
  <symbol id="p-col" viewBox="0 0 16 16"><path d="M1 1.500H5M2 1.500V14H6M2 7.500H6" fill="none" stroke="#888"/><path d="M4.500 5.500H8V9H4.500ZM4.500 12H8V15.500H4.500Z" fill="#fff" stroke="#e8962a" stroke-width="1.200"/><path d="M9.500 14.500H13.500V6H16L11.500 .8L7 6H9.500Z" fill="#6b94c4" stroke="#35608f" stroke-width=".8"/></symbol>
  <symbol id="p-del" viewBox="0 0 16 16"><rect x="1.500" y="1.500" width="11.500" height="11.500" fill="#f0f0f0" stroke="#777"/><rect x="9.500" y="10" width="6.500" height="5.500" rx="1" fill="#e2353c"/><path d="M10.800 12.700H14.800" stroke="#fff" stroke-width="1.400"/></symbol>
  <symbol id="check" viewBox="0 0 16 16"><path d="M3 7.500L6.500 11.500L12.500 3.500" fill="none" stroke="#1b1b1b" stroke-width="2.300"/></symbol>
  <symbol id="chev-l" viewBox="0 0 10 10"><path d="M7.500 1L3 5L7.500 9" fill="none" stroke="#505050" stroke-width="2"/></symbol>
  <symbol id="chev-r" viewBox="0 0 10 10"><path d="M2.500 1L7 5L2.500 9" fill="none" stroke="#505050" stroke-width="2"/></symbol>
  <symbol id="cross" viewBox="0 0 10 10"><path d="M1 1L9 9M9 1L1 9" fill="none" stroke="currentColor" stroke-width="1.800"/></symbol>
  <symbol id="float" viewBox="0 0 10 10"><path d="M3.500 4V1.500H9.500V5.500H7M3 1.500H10" fill="none" stroke="#000" stroke-width="1.300"/><path d="M.7 4.500H6.500V9H.7Z" fill="#dadada" stroke="#000" stroke-width="1.300"/></symbol>
</svg>

<div class="window">
  <header class="titlebar">
    <svg class="logo"><use href="#qlogo"/></svg>
    <h1>QGIS 2.18.3</h1>
    <div class="winbtns">
      <svg class="wb-min" viewBox="0 0 14 14"><path d="M0 12H14" stroke="#111" stroke-width="2.500"/></svg>
      <svg class="wb-max" viewBox="0 0 14 14"><path d="M3.500 3.500V1H13.500V10.500H11" fill="none" stroke="#111" stroke-width="1.300"/><path d="M.7 4.500H11V13.300H.7Z" fill="none" stroke="#111" stroke-width="1.300"/><path d="M0 4.500H11.500M3 1H14" stroke="#111" stroke-width="2"/></svg>
      <div class="wb-close"><svg><use href="#cross"/></svg></div>
    </div>
  </header>
  <nav class="menubar">
    <span style="width:65px">Pro<u>y</u>ecto</span><span style="width:56px"><u>E</u>dición</span><span style="width:35px"><u>V</u>er</span><span style="width:45px"><u>C</u>apa</span><span style="width:94px">Confi<u>g</u>uración</span><span style="width:101px">Co<u>m</u>plementos</span><span style="width:65px">Vect<u>o</u>rial</span><span style="width:53px"><u>R</u>áster</span><span style="width:96px">Base de <u>d</u>atos</span><span style="width:41px"><u>W</u>eb</span><span style="width:67px">Pro<u>c</u>esos</span><span style="width:50px">A<u>y</u>uda</span>
  </nav>

  <div class="toolrow">
    <div class="toolbar"><i class="grip"></i>
      <b class="tool"><svg><use href="#i-new"/></svg></b><b class="tool"><svg><use href="#i-open"/></svg></b><b class="tool"><svg><use href="#floppy"/></svg></b><b class="tool"><svg><use href="#i-saveas"/></svg></b><b class="tool"><svg><use href="#i-layout"/></svg></b><b class="tool"><svg><use href="#i-layouts"/></svg></b>
    </div>
    <div class="toolbar"><i class="grip"></i>
      <b class="tool"><svg><use href="#i-touch"/></svg></b><b class="tool"><svg><use href="#i-hand"/></svg></b><b class="tool"><svg><use href="#i-pansel"/></svg></b><b class="tool"><svg><use href="#i-zin"/></svg></b><b class="tool"><svg><use href="#i-zout"/></svg></b><b class="tool"><svg><use href="#lens-g"/><text x="9" y="12.500" class="z11">1:1</text></svg></b><b class="tool"><svg><use href="#i-zfull"/></svg></b><b class="tool"><svg><use href="#i-zsel"/></svg></b><b class="tool"><svg><use href="#i-zlay"/></svg></b><b class="tool"><svg><use href="#i-zlast"/></svg></b><b class="tool"><svg><use href="#i-znext"/></svg></b><b class="tool"><svg><use href="#i-bmnew"/></svg></b><b class="tool"><svg><use href="#i-bm"/></svg></b><b class="tool"><svg><use href="#i-refresh"/></svg></b>
    </div>
    <div class="toolbar"><i class="grip"></i>
      <b class="tool on"><svg><use href="#i-ball"/><text x="6" y="14.500" class="ident">i</text><use href="#cursor" x="12" y="8" width="12" height="16"/></svg></b><b class="tool"><svg><use href="#i-gear"/></svg></b><b class="drop grey"><svg><use href="#down"/></svg></b><b class="tool"><svg><use href="#i-select"/></svg></b><b class="drop"><svg><use href="#down"/></svg></b><b class="tool"><svg><use href="#i-exprsel"/></svg></b><b class="drop"><svg><use href="#down"/></svg></b><b class="tool"><svg><use href="#i-desel"/></svg></b><b class="tool"><svg><use href="#i-table"/></svg></b><b class="tool"><svg><use href="#i-abacus"/></svg></b><b class="tool"><svg><use href="#i-sum"/></svg></b><b class="tool"><svg><use href="#i-measure"/></svg></b><b class="drop"><svg><use href="#down"/></svg></b><b class="tool"><svg><use href="#i-tip"/></svg></b><b class="tool"><svg><use href="#i-text"/><text x="7" y="14" class="ttext">T</text></svg></b><b class="drop"><svg><use href="#down"/></svg></b>
    </div>
    <div class="toolbar last"><i class="grip"></i><b class="tool"><svg><use href="#i-book"/><text x="10.500" y="17" class="bookq">?</text></svg></b></div>
  </div>

  <div class="toolrow">
    <div class="toolbar"><i class="grip"></i>
      <b class="tool"><svg><use href="#i-edits"/></svg></b><b class="tool"><svg><use href="#i-pencil"/></svg></b><b class="tool"><svg><use href="#i-savee"/></svg></b><b class="tool"><svg><use href="#i-poly"/></svg></b><b class="tool"><svg><use href="#i-curve"/></svg></b><b class="drop grey"><svg><use href="#down"/></svg></b><b class="tool"><svg><use href="#i-move"/></svg></b><b class="tool"><svg><use href="#i-node"/></svg></b><b class="tool"><svg><use href="#i-trash"/></svg></b><b class="tool"><svg><use href="#i-cut"/></svg></b><b class="tool"><svg><use href="#i-copy"/></svg></b><b class="tool"><svg><use href="#i-paste"/></svg></b>
    </div>
    <div class="toolbar"><i class="grip"></i>
      <b class="tool"><svg><use href="#tag"/><text x="5.500" y="12.600" class="tagtxt">abc</text></svg></b><b class="tool"><svg><use href="#i-pie"/></svg></b><b class="tool"><svg><use href="#i-pinbg"/><text x="4.500" y="12.600" class="tagtxt">ab</text><use href="#i-pin"/></svg></b><b class="tool"><svg><use href="#tag-g"/><text x="4.500" y="12" class="tagtxt dim">ab</text><use href="#i-ping"/></svg></b><b class="tool"><svg><use href="#tag-g"/><text x="4.500" y="12" class="tagtxt dim">abc</text><use href="#i-lshow"/></svg></b><b class="tool"><svg><use href="#tag-g"/><text x="4.500" y="12" class="tagtxt dim">abc</text><use href="#i-lmove"/></svg></b><b class="tool"><svg><use href="#tag-g"/><text x="4.500" y="12" class="tagtxt dim">abc</text><use href="#i-lrot"/></svg></b><b class="tool"><svg><use href="#tag-g"/><text x="4.500" y="12" class="tagtxt dim">abc</text><use href="#i-ledit"/></svg></b>
    </div>
    <div class="toolbar"><i class="grip"></i><b class="tool"><svg><use href="#i-csw"/><text x="3.400" y="14" class="csw">CSW</text></svg></b></div>
    <div class="toolbar last"><i class="grip"></i><b class="tool"><svg><use href="#i-py"/></svg></b></div>
  </div>

  <div class="toolrow">
    <div class="toolbar"><i class="grip"></i>
      <b class="tool"><svg><use href="#i-in"/></svg></b><b class="tool"><svg><use href="#i-out"/></svg></b><i class="vsep"></i><b class="tool"><svg><use href="#i-isearch"/></svg></b><b class="tool"><svg><use href="#i-iedit"/></svg></b><b class="tool"><svg><use href="#i-icheck"/></svg></b><i class="vsep"></i><b class="tool"><svg><use href="#i-iimp"/></svg></b><b class="tool"><svg><use href="#i-iconf"/></svg></b>
    </div>
    <div class="toolbar last"><i class="grip"></i><b class="tool"><svg><use href="#i-ibge"/><text x="4.500" y="14" class="ibge">ibge</text></svg></b><b class="tool"><svg><use href="#i-ibge"/><text x="4.500" y="14" class="ibge">ibge</text></svg></b></div>
  </div>

  <main class="work">
    <aside class="side">
      <i class="hgrip"></i>
      <div class="srow"><svg><use href="#l-vec"/></svg></div>
      <div class="srow"><svg><use href="#l-ras"/></svg></div>
      <div class="srow"><svg><use href="#l-feather"/></svg></div>
      <div class="srow"><svg><use href="#l-pg"/></svg><b class="drop"><svg><use href="#down"/></svg></b></div>
      <div class="srow"><svg><use href="#l-wms"/></svg><b class="drop"><svg><use href="#down"/></svg></b></div>
      <div class="srow"><svg><use href="#l-wcs"/></svg></div>
      <div class="srow"><svg><use href="#l-wfs"/></svg><b class="drop"><svg><use href="#down"/></svg></b></div>
      <div class="srow"><svg><use href="#l-csv"/></svg></div>
      <div class="srow"><svg><use href="#l-virt"/></svg></div>
      <div class="srow"><svg><use href="#l-vnew"/></svg><b class="drop"><svg><use href="#down"/></svg></b></div>
      <div class="srow mid"><svg><use href="#l-satnew"/></svg></div>
      <div class="srow mid"><svg><use href="#l-rnew"/></svg></div>
      <i class="hline"></i>
      <i class="hgrip second"></i>
      <div class="srow mid"><svg><use href="#l-cross"/></svg></div>
      <div class="srow mid"><svg><use href="#l-comp"/></svg></div>
      <div class="srow mid"><svg><use href="#sat"/></svg></div>
      <div class="srow mid"><svg><use href="#l-topo"/></svg></div>
      <div class="srow mid"><svg><use href="#l-check"/></svg></div>
    </aside>

    <section class="layers">
      <div class="docktitle"><span class="t-dock">Panel de capas</span><svg class="dk"><use href="#float"/></svg><svg class="dk"><use href="#cross"/></svg></div>
      <div class="docktools">
        <svg><use href="#p-style"/></svg><svg><use href="#p-group"/></svg><svg><use href="#p-eye"/></svg><svg><use href="#p-filter"/></svg><svg><use href="#p-expr"/></svg><b class="drop"><svg><use href="#down"/></svg></b><svg><use href="#p-exp"/></svg><svg><use href="#p-col"/></svg><svg><use href="#p-del"/></svg>
      </div>
      <div class="tree">
        <div class="layer"><span class="cbx"><svg><use href="#check"/></svg></span><i class="swatch"></i><span class="lname">ArqAcores_GOriental_AAd_CAOP2015</span></div>
      </div>
      <div class="tabs"><span class="tab active">Panel de capas</span><span class="tab">Panel del explorador</span></div>
    </section>

    <section class="canvas">
      <svg viewBox="522 154 1051 846" class="map">
        <g transform="translate(530 390) scale(.33333)">
          <path class="land" d="M781 402L775 392 772 376 765 384 753 377 752 388 746 395 735 385 724 375 722 345 710 325 704 308 699 290 700 278 688 277 676 268 666 245 661 225 657 207 640 195 628 178 616 166 612 158 597 157 583 154 570 146 558 145 545 136 533 126 520 124 505 112 490 105 487 94 478 97 463 92 445 80 430 68 418 65 400 58 388 49 375 46 355 41 335 45 329 55 328 67 320 77 300 90 280 102 273 114 255 115 235 108 207 106 204 97 188 100 184 110 190 130 186 143 175 145 177 160 181 175 170 185 160 205 140 217 118 213 115 225 120 238 105 243 95 236 94 248 98 262 90 280 80 295 56 306 68 322 63 345 72 372 90 400 103 425 108 455 115 470 150 500 190 522 207 540 215 563 240 573 255 585 268 600 280 601 295 612 325 620 341 632 343 648 360 655 372 680 387 708 415 710 435 730 460 752 490 765 520 788 550 808 572 835 580 852 605 862 635 875 650 905 680 930 717 946 722 953 740 955 765 964 781 960"/>
          <path class="edge" d="M273 114L303 138 310 170 320 207M418 65L408 95 390 125 380 150 387 172 379 200M533 126L500 150 490 180 483 195 470 215 465 240 450 245 438 254M583 154L578 172 565 198 540 225 515 258 490 285 470 312 458 350 448 367M660 228L645 230 652 257 610 285 570 315 558 332 540 345 500 358 470 360 452 370M722 345L690 360 645 383 610 392 580 410 560 418 520 442 517 430 532 427 505 430 500 458 488 468 470 450 460 438 437 430 437 397 458 395 452 370M214 287L216 265 230 242 260 226 295 218 298 209 320 207 365 196 378 200 405 212 425 228 435 255 440 290 448 318 443 350 452 370M214 287L220 305 222 340 235 370 262 390 300 413 345 427 380 424 415 412 437 409M120 238L165 265 190 280 214 287M115 470L160 436 195 434 240 412 262 390M220 565L232 535 250 505 290 487 325 475 340 460 355 445 380 424M488 468L495 497 507 497 510 485 530 478L550 485 565 492 595 487 632 472 665 480 675 500 683 552 714 567 714 598M492 497L475 550 492 580 492 640 487 690 472 715 460 752M530 478L540 500 550 515 522 532 530 550 520 575 503 580 505 606 527 610 530 650 540 680 536 710 562 722 557 735 565 765 587 768 590 798 613 800 610 830 620 834 630 829 650 828 657 838 657 822 680 828 690 845 708 880 712 905 718 948M550 515L560 545 557 575 595 615 615 655 637 685 632 740 636 785 657 805 657 838"/>
        </g>
        <g transform="translate(760 500) scale(.33333)">
          <path class="land" d="M89 60L85 78 95 92 112 97 132 99 145 107 165 109 182 118 210 114 226 123 255 131 275 117 298 117 302 104 312 115 335 126 355 138 370 153 385 155 402 152 406 166 434 178 455 190 480 205 492 204 494 182 505 185 520 193 545 190 560 183 575 186 586 197 598 184 616 193 645 183 670 168 700 160 728 152 740 145 745 130 758 120V710L722 712 700 682 680 665 665 657 660 648 632 630 605 612 585 597 570 572 545 575 535 583 510 588 490 583 465 575 440 563 420 565 402 570 375 558 350 542 335 545 320 538 300 542 285 558 270 574 255 570 235 573 222 586 195 588 175 586 155 598 135 615 132 620 105 627 88 632"/>
          <path class="edge" d="M132 99L130 165 120 180 95 205 75 215 60 235 20 268M0 228L22 235 23 268 45 295 65 305 75 318 105 320 130 320 133 306 160 305 175 282 200 283M226 123L222 210 210 250 200 283 215 300 235 298 245 315 255 318 260 328 265 325M352 138L315 195 305 225 280 255 278 285 265 312 265 325M265 305L285 313 312 300 318 270 328 266 345 213 388 228 398 205 420 215M434 178L415 235 400 270 398 300 383 325 400 368 433 405 470 435 490 432M265 325L285 325 303 338 330 355 352 362 370 385 380 415 420 400 433 405M303 338L295 365 297 392 309 392 303 430 297 478 265 500 235 525 237 573M297 392L290 403 275 408 255 403 240 440 222 470 205 470 200 460 187 465 187 478 165 485 158 520 154 560 158 597M187 478L200 483 195 528 235 535M105 320L113 390 97 400 97 410 105 437 145 440 155 498M105 437L90 447 110 522 88 540 70 542 50 553 18 550 28 622M0 515L18 550M70 542L75 555 90 590 97 597 105 627M105 527L112 560 128 588 135 605M380 415L378 440 368 455 372 480 350 510 342 520 338 543M480 435L465 442 460 455 435 485 438 510 425 550 410 552 410 567M586 197L586 260 593 285 590 300 602 315 635 313 660 300 680 262 705 232 715 272 735 330 753 360M602 315L583 320 575 350 540 380 518 405 500 415 490 432M518 405L525 410 545 410 555 392 565 385 600 402 603 422 615 422 620 430 635 428 648 440 643 465 630 475 590 470 588 498 575 510M490 432L515 460 545 500 575 512 570 530 545 560 540 575M648 440L655 433 680 440 720 457 753 453M632 630L697 590 700 602 710 595 715 588 730 588 753 578M700 160L703 175 715 180 720 205 753 262M728 152L748 160 750 190"/>
          <path class="pier" d="M132 620L162 625 193 613"/>
        </g>
      </svg>
    </section>

    <section class="results">
      <div class="docktitle"><span></span><svg class="dk"><use href="#cross"/></svg></div>
      <div class="docktools"></div>
      <div class="resview">
        <div class="reshead"></div>
        <div class="resbody"></div>
        <div class="hscroll"><svg><use href="#chev-l"/></svg><i class="thumb"></i><svg class="endchev"><use href="#chev-r"/></svg></div>
      </div>
      <div class="resform"><span class="t-modo">Modo</span><span class="combo wide">Capa actual<svg><use href="#down"/></svg></span><span class="cbx"></span><span class="t-auto">Auto abrir formulario</span></div>
      <div class="resform two"><span class="t-ver">Ver</span><span class="combo off">Árbol<svg><use href="#down"/></svg></span><span class="btn sm">Ayuda</span></div>
    </section>
  </main>

  <footer class="status">
    <span class="msg">Alterna el estado de edición de la capa activa</span>
    <span class="s-coord">Coordenada</span><span class="field coord">610993,4159548</span>
    <svg class="mouse" viewBox="0 0 18 20"><path d="M2 3C3 0 9 0 10 4L12 9C14 9 16 12 15 15C13 19 8 18 7 16L3 9Z" fill="#f8f8f8" stroke="#111" stroke-width="1.700"/><path d="M5 1L8 8M9 3L3 7M1 11L5 17M12 4L16 1M3 3L7 9" stroke="#111" stroke-width="1.800"/><circle cx="11" cy="13.500" r="2.300" fill="#fff" stroke="#111" stroke-width="1.500"/></svg>
    <span class="s-esc">Escala</span><span class="field scale">1:301.188<svg viewBox="0 0 10 10"><path d="M1 2.500L5 7.500L9 2.500" fill="none" stroke="#444" stroke-width="2"/></svg></span>
    <svg class="lock" viewBox="0 0 16 20"><path d="M4 10V5.500Q4 1.500 8 1.500T12 5.500V10" fill="none" stroke="#8a8a8a" stroke-width="2.200"/><rect x=".5" y="9.500" width="15" height="10.500" rx="1" fill="#666"/></svg>
    <span class="s-amp">Amplificador</span><span class="field spin">100%<i class="updown"><svg><use href="#down"/></svg><svg><use href="#down"/></svg></i></span>
    <span class="s-rot">Rotación</span><span class="field spin">0,0<i class="updown"><svg><use href="#down"/></svg><svg><use href="#down"/></svg></i></span>
    <span class="cbx"><svg><use href="#check"/></svg></span><span class="s-rep">Representar</span>
    <svg class="globe" viewBox="0 0 20 20"><circle cx="10" cy="10" r="9.300" fill="#2b2b2b"/><g fill="none" stroke="#ddd" stroke-width="1"><path d="M10 2L18 10L10 18L2 10Z"/><path d="M6 6Q10 4 14 6Q16 10 14 14Q10 16 6 14Q4 10 6 6ZM10 1V19M1 10H19"/></g><path d="M7.500 7.500H12.500V12.500H7.500Z" fill="#fff" opacity=".8"/></svg>
    <span class="s-user">USER:100004 (al vuelo)</span>
    <svg class="bubble" viewBox="0 0 20 20"><path d="M10 1C15.500 1 20 4.500 20 9C20 11.500 19 13 17.500 14.500L18.500 19L13 16.700C5 18 0 13.500 0 9C0 4.500 4.500 1 10 1Z" fill="#666"/><g fill="#fff"><circle cx="5" cy="9" r="1.600"/><circle cx="10" cy="9" r="1.600"/><circle cx="15" cy="9" r="1.600"/></g></svg>
  </footer>
</div>

<div class="dialog">
  <div class="dtitle"><svg class="logo"><use href="#qlogo"/></svg><h2>Constructor de consultas</h2><svg class="help" viewBox="0 0 11 17"><path d="M1 5V3.500L3 1.500H8L9.800 3.500V6.500L5.500 9.500V12M4 15H7" fill="none" stroke="#2a2a2a" stroke-width="2.800"/></svg><span class="dclose"><svg><use href="#cross"/></svg></span></div>
  <div class="dbody">
    <p class="intro">Establecer filtro de proveedor en ArqAcores_GOriental_AAd_CAOP2015</p>
    <div class="pair">
      <div class="group"><h3><span>Campos</span></h3>
        <ul class="list fields"><li>DICOFRE</li><li>AREA_EA_HA</li><li>AREA_T_HA</li><li>FREGUESIA</li><li>MUNICIPIO</li><li class="sel">Ilha</li><li>TAA</li></ul>
      </div>
      <div class="group"><h3><span>Valores</span></h3>
        <ul class="list values"><li>ILHA DE SANTA MARIA (AÇORES)</li><li class="sel">ILHA DE SÃO MIGUEL (AÇORES)</li></ul>
        <div class="vbtns"><span class="btn">Muestra</span><span class="btn">Todos</span></div>
        <div class="unf"><span class="cbx off"></span><span>Usar capa no filtrada</span></div>
      </div>
    </div>
    <div class="opgroup">
      <h3><svg><use href="#down"/></svg><span>Operadores</span><i></i></h3>
      <div class="opgrid">
        <span class="btn">=</span><span class="btn">&lt;</span><span class="btn">&gt;</span><span class="btn">COMO</span><span class="btn">%</span><span class="btn">EN</span><span class="btn">NO EN</span>
        <span class="btn">&lt;=</span><span class="btn">&gt;=</span><span class="btn">!=</span><span class="btn">DISTINTO DE</span><span class="btn">Y</span><span class="btn">O</span><span class="btn">NO</span>
      </div>
    </div>
    <div class="group expr"><h3><span>Expresión de filtrado específica del proveedor</span></h3>
      <div class="editor">
        <div class="edmain"><i class="margin"></i><code><span class="id">"Ilha"</span> <span class="kw">LIKE</span> <span class="str">'ILHA DE SÃO MIGUEL (AÇORES)'</span></code></div>
        <div class="hscroll"><svg><use href="#chev-l"/></svg><i class="thumb"></i><svg class="endchev"><use href="#chev-r"/></svg></div>
      </div>
    </div>
    <div class="dbtns"><span class="btn default">Aceptar</span><span class="btn">Probar</span><span class="btn">Limpiar</span><span class="btn">Cancelar</span><span class="btn">Ayuda</span></div>
  </div>
</div>
</body>
</html>
```
FILE: styles.css
```css
* { box-sizing: border-box; }
body {
  margin: 0; width: 1920px; height: 1032px; overflow: hidden; position: relative;
  background: #f0f0f0; color: #000;
  font: 13px/16px "DejaVu Sans Condensed", "DejaVu Sans", sans-serif;
  letter-spacing: -.2px; white-space: nowrap;
}
h1, h2, h3, p, ul { margin: 0; padding: 0; }
ul { list-style: none; }
svg { display: block; flex: none; }
.sprite { position: absolute; width: 0; height: 0; }
.tagtxt { font: bold 8px "DejaVu Sans Condensed", sans-serif; fill: #333; letter-spacing: 0; }
.tagtxt.dim { fill: #8a8a8a; }
.z11 { font: bold 8px "DejaVu Sans Condensed", sans-serif; fill: #888; letter-spacing: -.5px; }
.ident { font: italic bold 16px "Liberation Serif", serif; fill: #fff; }
.ttext { font: bold 15px "Liberation Serif", serif; fill: #555; }
.bookq { font: bold 14px "DejaVu Sans Condensed", sans-serif; fill: #e4edf8; }
.csw { font: bold 8px "DejaVu Sans Condensed", sans-serif; fill: #555; letter-spacing: 0; }
.ibge { font: bold 7px "DejaVu Sans Condensed", sans-serif; fill: #ddd; letter-spacing: 0; }

.window { width: 1920px; height: 1032px; display: flex; flex-direction: column; }
.titlebar { height: 29px; background: #ebebeb; border-bottom: 1px solid #d9d9d9; display: flex; align-items: flex-start; }
.logo { width: 16px; height: 20px; }
.titlebar .logo { margin: 4px 0 0 4px; }
h1, h2 { font: 18px/24px "Open Sans", sans-serif; color: #333; }
h1 { flex: 1; text-align: center; padding: 3px 0 0 98px; letter-spacing: -.1px; }
.winbtns { display: flex; width: 120px; }
.winbtns svg { width: 14px; height: 14px; }
.wb-min { margin: 4px 0 0 1px; }
.wb-max { margin: 5px 0 0 20px; }
.wb-close { width: 57px; height: 24px; margin-left: 9px; background: #bcbcbc; color: #fff; display: flex; align-items: center; justify-content: center; }
.winbtns .wb-close svg { width: 10px; height: 10px; }
.menubar { height: 22px; background: #f5f6f7; border-bottom: 1px solid #e6e8ec; display: flex; padding: 3px 0 0 8px; color: #9a9a9a; font-size: 12.500px; letter-spacing: -.05px; }
.menubar span { flex: none; }
.menubar u { text-underline-offset: 2px; }

.toolrow { height: 34px; flex: none; display: flex; border-top: 1px solid #fcfcfc; border-bottom: 1px solid #b8b8b8; }
.toolbar { display: flex; align-items: center; padding-right: 1px; border-right: 1px solid #b8b8b8; }
.toolbar.last { border-right: 0; }
.grip { width: 12px; height: 26px; background: radial-gradient(circle at 1.500px 1.500px, #b4b4b4 1.200px, transparent 1.500px) 4px 0 / 8px 4px; clip-path: inset(0 4px 0 3px); }
.tool { width: 31px; height: 30px; flex: none; display: flex; align-items: center; padding-left: 3px; font-weight: normal; }
.tool svg { width: 24px; height: 24px; }
.tool.on { background: #b8d6f2; border: 1px solid #66a5e0; padding-left: 2px; }
.drop { width: 15px; display: flex; justify-content: center; }
.drop svg, .docktools .drop svg { width: 10px; height: 6px; margin: 0; }
.drop.grey { fill: #777; }
.vsep { width: 1px; height: 24px; margin: 0 3px; background: #cacaca; }

.work { flex: 1; min-height: 0; display: flex; }
.side { width: 50px; border-right: 1px solid #a0a0a0; padding-top: 3px; display: flex; flex-direction: column; flex: none; }
.hgrip { height: 5px; margin: 0 3px 3px 4px; background: radial-gradient(circle at 1.500px 1.500px, #b4b4b4 1.200px, transparent 1.500px) 0 0 / 4px 8px; }
.srow { height: 30px; flex: none; display: flex; align-items: center; padding-left: 5px; }
.srow:nth-child(2) { margin-top: 1px; }
.srow > svg { width: 24px; height: 24px; }
.srow .drop { margin-left: 3px; }
.srow.mid { padding-left: 12px; }
.hline { height: 1px; background: #b8b8b8; margin-top: 1px; }
.hgrip.second { margin-top: 4px; margin-bottom: 3px; }

.layers { width: 466px; flex: none; padding-top: 1px; display: flex; flex-direction: column; }
.docktitle { height: 23px; flex: none; background: #dadada; border: 1px solid #b4b4b4; display: flex; align-items: center; padding: 1px 4px 0 2px; }
.docktitle span { flex: 1; }
.dk { width: 9px; height: 9px; margin-left: 8px; }
.docktools { height: 27px; flex: none; display: flex; align-items: center; padding: 2px 0 0 4px; border-right: 1px solid #c4c4c4; }
.docktools > svg { width: 16px; height: 16px; margin-right: 7px; }
.docktools .drop { width: 13px; margin: 0 6px 0 -3px; }
.tree { flex: 1; background: #fff; border: 1px solid #828790; padding-top: 1px; }
.layer { height: 20px; margin-left: 20px; background: #d1e7ff; border: 1px solid #66a7e8; display: flex; align-items: center; padding-left: 2px; }
.cbx { width: 16px; height: 16px; flex: none; background: #fff; border: 1px solid #707070; }
.cbx svg { width: 14px; height: 14px; }
.cbx.off { background: #e6e6e6; border-color: #bcbcbc; }
.swatch { width: 18px; height: 18px; margin: 0 6px; background: #79a3e0; border: 1px solid #46689c; }
.lname { font-weight: bold; text-decoration: underline; letter-spacing: .13px; }
.tabs { height: 25px; flex: none; display: flex; align-items: flex-start; }
.tab { height: 22px; width: 144px; text-align: center; line-height: 22px; background: #ececec; border: 1px solid #b8b8b8; border-top: 0; }
.tab.active { height: 24px; width: 117px; background: #fff; line-height: 25px; }

.canvas { width: 1053px; height: 848px; margin-left: 5px; flex: none; background: #fff; border: 1px solid #828790; overflow: hidden; }
.map { width: 1051px; height: 846px; }
.land { fill: #94a9d4; stroke: #000; stroke-width: 4.200; stroke-linejoin: round; }
.edge { fill: none; stroke: #000; stroke-width: 4; stroke-linejoin: round; }
.pier { fill: none; stroke: #000; stroke-width: 5; }

.results { flex: 1; margin-left: 5px; padding-top: 1px; display: flex; flex-direction: column; }
.resview { height: 732px; flex: none; background: #fff; border: 1px solid #828790; display: flex; flex-direction: column; }
.reshead { height: 26px; background: #fbfbfb; border-bottom: 1px solid #e3eef8; }
.resbody { flex: 1; }
.hscroll { height: 19px; flex: none; margin-bottom: 1px; background: #f0f0f0; display: flex; align-items: center; }
.hscroll svg { width: 10px; height: 10px; margin: 0 6px 0 5px; }
.hscroll .endchev { margin-left: auto; }
.thumb { height: 19px; width: 286px; background: #cdcdcd; display: flex; align-items: center; justify-content: center; }
.thumb::after { content: ""; width: 12px; height: 11px; background: #f0f0f0; }
.resform { height: 22px; margin: 5px 6px 0 5px; display: flex; align-items: center; flex: none; }
.resform.two { margin-top: 8px; }
.t-modo { width: 37px; }
.t-ver { width: 25px; color: #8a8a8a; }
.combo { height: 22px; flex: none; display: flex; align-items: center; justify-content: space-between; padding: 0 5px 0 3px; border: 1px solid #acacac; background: linear-gradient(#f0f0f0, #e5e5e5); }
.combo svg { width: 8px; height: 5px; }
.combo.wide { width: 141px; margin-right: 6px; }
.combo.off { width: 73px; margin-right: auto; color: #8a8a8a; border-color: #d0d0d0; background: #efefef; fill: #a0a0a0; }
.t-auto { margin-left: 6px; }
.btn { height: 26px; width: 91px; border: 1px solid #a8a8a8; background: linear-gradient(#f1f1f1, #e4e4e4); display: flex; align-items: center; justify-content: center; flex: none; }
.btn.sm { width: 48px; height: 20px; }
.btn.default { border-color: #3399ff; }

.status { height: 30px; flex: none; display: flex; align-items: center; padding-left: 6px; }
.status span, .status > svg { flex: none; }
.msg { width: 766px; }
.s-coord { width: 72px; letter-spacing: -.45px; }
.field { height: 22px; background: #fff; border: 1px solid #ababab; display: flex; align-items: center; padding-left: 4px; }
.coord { width: 245px; justify-content: center; }
.mouse { width: 18px; height: 20px; margin: 0 14px 0 4px; }
.s-esc { width: 39px; letter-spacing: -.4px; }
.scale { width: 99px; justify-content: space-between; padding-right: 4px; }
.scale svg { width: 10px; height: 10px; }
.lock { width: 16px; height: 20px; margin: 0 15px 0 5px; }
.s-amp { width: 74px; letter-spacing: -.45px; }
.spin { width: 75px; justify-content: space-between; padding-right: 1px; }
.updown { width: 15px; height: 18px; border: 1px solid #b8b8b8; background: #eee; display: flex; flex-direction: column; align-items: center; justify-content: space-between; padding: 2px 0; }
.updown svg { width: 8px; height: 4.500px; }
.updown svg:first-child { transform: rotate(180deg); }
.s-rot { width: 58px; margin-left: 9px; letter-spacing: -.4px; }
.status .cbx { margin: 0 6px; }
.s-rep { width: 88px; letter-spacing: -.4px; }
.globe { width: 20px; height: 20px; margin-right: 4px; }
.s-user { width: 157px; letter-spacing: 0; }
.bubble { width: 20px; height: 20px; }

.dialog { position: absolute; left: 1011px; top: 156px; width: 891px; height: 736px; background: #cca47c; border: 1px solid #a07d58; box-shadow: 0 0 4px rgba(0,0,0,.25); padding: 0 7px 7px; display: flex; flex-direction: column; }
.dtitle { height: 36px; display: flex; align-items: flex-start; }
.dtitle .logo { margin: 9px 0 0 5px; }
h2 { flex: 1; text-align: center; line-height: 36px; padding-left: 57px; letter-spacing: -.06px; }
.help { width: 11px; height: 17px; margin: 5px 12px 0 0; }
.dclose { width: 58px; height: 26px; background: #c75050; color: #fff; display: flex; align-items: center; justify-content: center; }
.dclose svg { width: 11px; height: 10px; }
.dbody { flex: 1; background: #f0f0f0; border: 1px solid #b08a64; padding: 11px 11px 0 11px; display: flex; flex-direction: column; }
.intro { height: 20px; line-height: 18px; flex: none; letter-spacing: -.07px; }
.pair { display: flex; gap: 6px; margin-top: 10px; }
.group { width: 423px; height: 272px; border: 1px solid #dcdcdc; padding: 0 11px; display: flex; flex-direction: column; flex: none; }
h3 { font: bold 13px/16px "DejaVu Sans Condensed", "DejaVu Sans", sans-serif; color: #3c3c3c; }
.group h3 { height: 19px; flex: none; margin: -8px 0 8px -4px; }
.group h3 span { background: #f0f0f0; padding: 0 2px; }
.list { background: #fff; border: 1px solid #828790; padding: 1px; flex: none; }
.list.fields { height: 240px; width: 399px; }
.list.values { height: 180px; width: 398px; letter-spacing: .2px; }
.list li { height: 18px; padding-left: 2px; border: 1px solid transparent; line-height: 17px; }
.fields li:nth-child(even) { background: #f5f5f5; }
.list li.sel { background: #eee; border-color: #d4d4d4; }
.vbtns { display: flex; gap: 8px; margin: 7px 0 9px 1px; }
.vbtns .btn { width: 194px; }
.unf { display: flex; align-items: center; gap: 6px; color: #858585; }
.opgroup { height: 94px; margin-top: 14px; display: flex; flex-direction: column; flex: none; border: 1px solid #dcdcdc; border-top: 0; }
.opgroup h3 { display: flex; align-items: center; height: 18px; margin: -7px -1px 0 -1px; padding-left: 2px; background: #f0f0f0; }
.opgroup h3 svg { width: 12px; height: 8px; fill: #333; margin-right: 8px; }
.opgroup h3 i { flex: 1; height: 1px; background: #dcdcdc; margin: 0 0 2px 7px; }
.opgrid { display: grid; grid-template-columns: repeat(7, 91px); gap: 8px; padding: 10px 0 0 12px; }
.group.expr { width: 851px; height: 209px; margin-top: 14px; }
.editor { height: 177px; width: 827px; border: 1px solid #828790; background: #fff; display: flex; flex-direction: column; flex: none; }
.edmain { flex: 1; display: flex; }
.margin { width: 14px; background: #f2f2f2; }
code { flex: 1; height: 21px; background: #fcf3ed; font: 17px/22px "DejaVu Sans Condensed", sans-serif; letter-spacing: .24px; padding-left: 1px; }
.id { color: #808000; letter-spacing: -.2px; }
.kw { color: #00007f; font-weight: bold; letter-spacing: -.3px; }
.str { color: #7f007f; }
.editor .thumb { width: 71px; }
.dbtns { display: flex; justify-content: flex-end; gap: 9px; margin: 7px 1px 0 0; }
```
